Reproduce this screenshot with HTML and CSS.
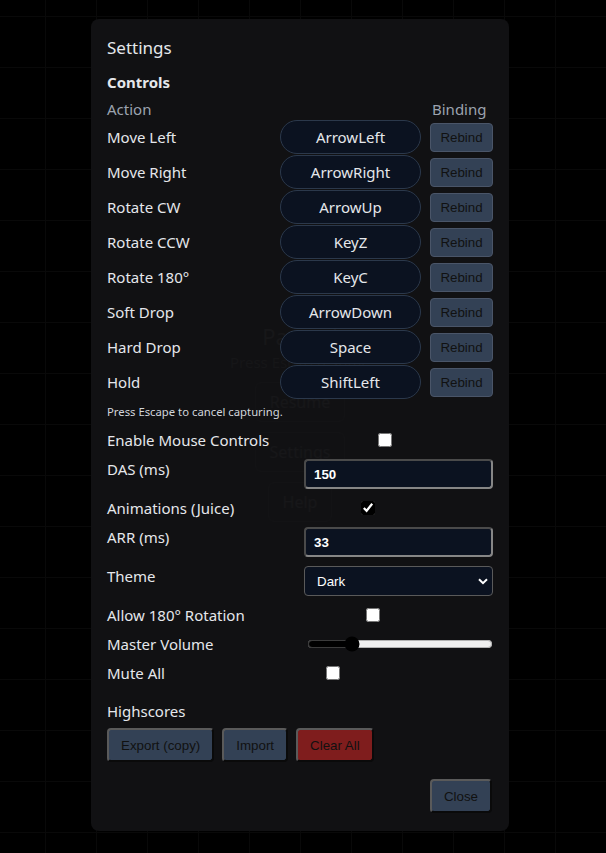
FILE: index.html
```html
<!DOCTYPE html>
<html lang="en">
<head>
<meta charset="utf-8">
<title>Settings</title>
<link rel="stylesheet" href="styles.css">
</head>
<body>
<div class="pause">
  <div class="pause-title">Paused</div>
  <div class="pause-hint">Press Esc to resume</div>
  <button class="pause-btn">Resume</button>
  <button class="pause-btn">Settings</button>
  <button class="pause-btn">Help</button>
</div>
<div class="overlay">
  <div class="modal">
    <h2 class="title">Settings</h2>
    <h3 class="section">Controls</h3>
    <div class="controls">
      <div class="head">Action</div><div></div><div class="head bind-head">Binding</div>
      <div class="action">Move Left</div><div class="key">ArrowLeft</div><button class="rebind">Rebind</button>
      <div class="action">Move Right</div><div class="key">ArrowRight</div><button class="rebind">Rebind</button>
      <div class="action">Rotate CW</div><div class="key">ArrowUp</div><button class="rebind">Rebind</button>
      <div class="action">Rotate CCW</div><div class="key">KeyZ</div><button class="rebind">Rebind</button>
      <div class="action">Rotate 180°</div><div class="key">KeyC</div><button class="rebind">Rebind</button>
      <div class="action">Soft Drop</div><div class="key">ArrowDown</div><button class="rebind">Rebind</button>
      <div class="action">Hard Drop</div><div class="key">Space</div><button class="rebind">Rebind</button>
      <div class="action">Hold</div><div class="key">ShiftLeft</div><button class="rebind">Rebind</button>
    </div>
    <p class="hint">Press Escape to cancel capturing.</p>
    <div class="settings">
      <label class="row row-center"><span>Enable Mouse Controls</span><span class="check-cell"><input type="checkbox" class="check"></span></label>
      <label class="row"><span class="lbl">DAS (ms)</span><input class="num" type="text" value="150"></label>
      <label class="row row-center"><span>Animations (Juice)</span><span class="check-cell"><input type="checkbox" class="check" checked></span></label>
      <label class="row"><span class="lbl">ARR (ms)</span><input class="num" type="text" value="33"></label>
      <label class="row"><span class="lbl">Theme</span>
        <span class="select-wrap">
          <select class="select"><option>Dark</option><option>Light</option></select>
          <svg class="chev" width="10" height="7" viewBox="0 0 10 7"><path d="M1 1.2 L5 5.2 L9 1.2" fill="none" stroke="#fff" stroke-width="2"/></svg>
        </span>
      </label>
      <label class="row row-center"><span>Allow 180° Rotation</span><span class="check-cell"><input type="checkbox" class="check"></span></label>
      <label class="row row-center"><span class="lbl">Master Volume</span><input class="range" type="range" min="0" max="1" step="0.01" value="0.22"></label>
      <label class="row row-center"><span>Mute All</span><span class="check-cell"><input type="checkbox" class="check"></span></label>
    </div>
    <div class="hs-title">Highscores</div>
    <div class="hs-actions">
      <button class="btn">Export (copy)</button>
      <button class="btn">Import</button>
      <button class="btn btn-danger">Clear All</button>
    </div>
    <div class="footer"><button class="btn">Close</button></div>
  </div>
</div>
</body>
</html>
```
FILE: styles.css
```css
* { box-sizing: border-box; }
html, body { margin: 0; height: 100%; }
body {
  position: relative;
  overflow: hidden;
  background-color: #000;
  background-image:
    linear-gradient(to right, #090909 1px, transparent 1px),
    linear-gradient(to bottom, #090909 1px, transparent 1px);
  background-size: 51px 51px;
  background-position: 45px 67px;
  font-family: "Noto Sans", "Open Sans", sans-serif;
  color: #e5e7eb;
}

/* ghost pause menu underneath the modal */
.pause {
  position: absolute;
  top: 322px;
  left: 0;
  width: 600px;
  display: flex;
  flex-direction: column;
  align-items: center;
  gap: 10px;
}
.pause-title { font-size: 22px; line-height: 28px; color: #ddd; }
.pause-hint { font-size: 15px; line-height: 20px; color: #bbb; margin-top: -8px; }
.pause-btn {
  height: 40px;
  padding: 0 14px;
  font-family: "Noto Sans", sans-serif;
  font-size: 16px;
  color: #ddd;
  background: #222;
  border: 1px solid #555;
  border-radius: 6px;
}

.overlay {
  position: absolute;
  inset: 0;
  display: flex;
  justify-content: center;
  align-items: flex-start;
  padding: 19px 6px 0 0;
}
.modal {
  width: 418px;
  background: rgba(17, 17, 19, 0.978);
  border-radius: 8px;
  padding: 16px 16px 18px;
  display: flex;
  flex-direction: column;
}
.title {
  margin: 1px 0 0;
  font-size: 17px;
  font-weight: 400;
  line-height: 24px;
  color: #e5e7eb;
}
.section {
  margin: 12px 0 0;
  font-size: 15px;
  font-weight: 700;
  line-height: 20px;
  color: #e5e7eb;
}
.controls {
  margin-top: 7px;
  display: grid;
  grid-template-columns: 1fr 141px 63px;
  grid-template-rows: 20px;
  grid-auto-rows: 34px;
  column-gap: 9px;
  row-gap: 1px;
  align-items: center;
}
.head { font-size: 15px; line-height: 20px; color: #9ca3af; }
.bind-head { padding-left: 2px; }
.action { font-size: 15px; line-height: 20px; color: #e5e7eb; }
.key {
  height: 34px;
  display: flex;
  align-items: center;
  justify-content: center;
  background: #0b1220;
  border: 1px solid #2b384b;
  border-radius: 17px;
  font-size: 15px;
  color: #e5e7eb;
}
.rebind {
  height: 29px;
  padding: 0;
  background: #334155;
  border: 1px solid #4a5568;
  border-radius: 4px;
  font-family: "Liberation Sans", Arial, sans-serif;
  font-size: 13.333px;
  color: #111;
}
.hint {
  margin: 5px 0 0;
  font-size: 11.3px;
  line-height: 16px;
  color: #d1d5db;
}
.settings {
  margin-top: 10px;
  display: flex;
  flex-direction: column;
  gap: 9px;
}
.row {
  display: flex;
  align-items: flex-start;
  gap: 8px;
  font-size: 15px;
  line-height: 20px;
  color: #e5e7eb;
}
.row-center { align-items: center; }
.lbl { flex: 1; }
.check-cell { flex: 1; display: flex; justify-content: center; }
.check {
  width: 14px;
  height: 14px;
  margin: 0;
  accent-color: #000;
}
.num {
  width: 189px;
  height: 30px;
  padding: 0 8px;
  background: #0b1220;
  color: #fff;
  border: 2px solid;
  border-color: #4a4a4a #868686 #868686 #4a4a4a;
  border-radius: 4px;
  font-family: "Liberation Sans", Arial, sans-serif;
  font-size: 13.333px;
  font-weight: 700;
}
.select-wrap {
  position: relative;
  width: 189px;
  height: 30px;
}
.select {
  appearance: none;
  -webkit-appearance: none;
  width: 100%;
  height: 100%;
  padding: 0 12px;
  background: #0b1220;
  color: #fff;
  border: 1px solid #5a5a5a;
  border-radius: 4px;
  font-family: "Liberation Sans", Arial, sans-serif;
  font-size: 13.333px;
}
.chev {
  position: absolute;
  right: 5px;
  top: 12px;
  pointer-events: none;
}
.range {
  width: 186px;
  height: 16px;
  margin: 0 0 0 3px;
  accent-color: #000;
}
.hs-title {
  margin-top: 18px;
  font-size: 15px;
  line-height: 20px;
  color: #e5e7eb;
}
.hs-actions {
  margin-top: 7px;
  display: flex;
  gap: 8px;
}
.btn {
  height: 34px;
  padding: 0 12px;
  background: #334155;
  border: 2px solid;
  border-color: #5a5a5a #0a0a0a #0a0a0a #5a5a5a;
  border-radius: 4px;
  font-family: "Liberation Sans", Arial, sans-serif;
  font-size: 13.333px;
  color: #111;
}
.btn-danger { background: #7f1d1d; }
.footer {
  margin-top: 17px;
  display: flex;
  justify-content: flex-end;
  padding-right: 1px;
}
```
